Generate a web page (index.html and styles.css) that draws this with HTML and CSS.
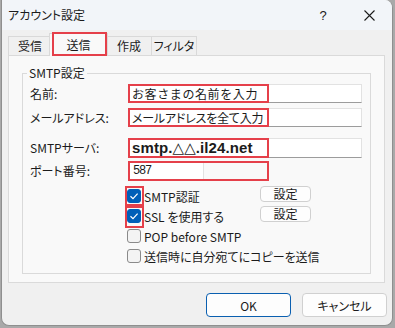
FILE: index.html
```html
<!DOCTYPE html>
<html lang="ja">
<head>
  <meta charset="UTF-8" />
  <title>アカウント設定</title>
  <link rel="stylesheet" href="styles.css">
</head>
<body>
  <div class="window">
    <div class="titlebar">
      <span class="title">アカウント設定</span>
      <span class="tb-btn help">?</span>
      <span class="tb-btn close">
        <svg width="11" height="11" viewBox="0 0 11 11"><path d="M0.5 0.5 L10.5 10.5 M10.5 0.5 L0.5 10.5" stroke="#1b1b1b" stroke-width="1.1" fill="none"/></svg>
      </span>
    </div>

    <div class="tabs">
      <div class="tab t-recv">受信</div>
      <div class="tab active">送信<span class="mark tab-mark"></span></div>
      <div class="tab t-make">作成</div>
      <div class="tab t-filter">フィルタ</div>
    </div>

    <div class="panel">
      <fieldset class="group">
        <legend>SMTP設定</legend>

        <div class="row first">
          <span class="lbl">名前:</span>
          <div class="field"><span class="mark field-mark name">お客さまの名前を入力</span></div>
        </div>
        <div class="row">
          <span class="lbl">メールアドレス:</span>
          <div class="field"><span class="mark field-mark mail">メールアドレスを全て入力</span></div>
        </div>
        <div class="row server">
          <span class="lbl">SMTPサーバ:</span>
          <div class="field"><span class="mark field-mark host">smtp.△△.il24.net</span></div>
        </div>
        <div class="row port">
          <span class="lbl">ポート番号:</span>
          <div class="field short"><span class="mark field-mark num">587</span></div>
        </div>

        <div class="checks">
          <div class="check">
            <span class="cb on"><svg width="14" height="14" viewBox="0 0 14 14"><path d="M3.5 7.2 L6 9.6 L10.6 4.6" stroke="#fff" stroke-width="1.2" fill="none"/></svg><span class="mark cb-mark"></span></span>
            <span>SMTP認証</span>
          </div>
          <button class="small-btn">設定</button>
          <div class="check">
            <span class="cb on"><svg width="14" height="14" viewBox="0 0 14 14"><path d="M3.5 7.2 L6 9.6 L10.6 4.6" stroke="#fff" stroke-width="1.2" fill="none"/></svg><span class="mark cb-mark tall"></span></span>
            <span>SSL を使用する</span>
          </div>
          <button class="small-btn">設定</button>
          <div class="check">
            <span class="cb"></span>
            <span>POP before SMTP</span>
          </div>
          <div></div>
          <div class="check wide">
            <span class="cb"></span>
            <span>送信時に自分宛てにコピーを送信</span>
          </div>
        </div>
      </fieldset>
    </div>

    <div class="footer">
      <button class="btn default">OK</button>
      <button class="btn">キャンセル</button>
    </div>
  </div>
</body>
</html>
```

FILE: styles.css
```css
body {
  margin: 0;
  background: #a9a9a9;
  font-family: "Noto Sans CJK JP", sans-serif;
  font-size: 12px;
  font-feature-settings: "palt";
  color: #1b1b1b;
}
.window {
  margin-left: 1px;
  width: 392px;
  height: 326px;
  box-sizing: border-box;
  background: #f0f0f0;
  border: 1px solid #8f8f8f;
  border-top: none;
  border-radius: 0 8px 8px 8px;
  overflow: hidden;
  display: flex;
  flex-direction: column;
}
.titlebar {
  height: 30px;
  flex: none;
  display: flex;
  align-items: center;
  background: #f2f5f9;
  padding-left: 6px;
}
.title { line-height: 16px; }
.tb-btn {
  width: 46px;
  height: 30px;
  display: flex;
  align-items: center;
  justify-content: center;
}
.help { margin-left: auto; font-family: "Liberation Sans", sans-serif; font-size: 13px; }

.tabs {
  display: flex;
  align-items: flex-end;
  height: 25px;
  flex: none;
  padding-left: 6px;
}
.tab {
  position: relative;
  box-sizing: border-box;
  height: 19px;
  line-height: 18px;
  text-align: center;
  margin-right: -1px;
  border: 1px solid #d9d9d9;
  border-bottom: none;
  background: #f0f0f0;
}
.t-recv { width: 44px; }
.t-make { width: 46px; }
.t-filter { width: 46px; }
.tab.active {
  width: 59px;
  height: 23px;
  line-height: 21px;
  margin: 0 -2px -1px -2px;
  background: #f9f9f9;
  z-index: 2;
}
.mark {
  position: absolute;
  box-sizing: border-box;
  border: 2px solid #e5404a;
}
.tab-mark { left: 2px; top: -2px; right: 0; bottom: 0; }

.panel {
  margin-left: 6px;
  width: 377px;
  height: 228px;
  box-sizing: border-box;
  background: #f9f9f9;
  border: 1px solid #dadada;
  padding: 9px 0 0 13px;
}
.group {
  margin: 0;
  width: 349px;
  height: 209px;
  box-sizing: border-box;
  border: 1px solid #dadada;
  padding: 0 0 0 7px;
}
.group legend {
  padding: 0 2px;
  margin-left: -3px;
  line-height: 16px;
}
.row {
  display: flex;
  align-items: center;
  height: 19px;
  margin-top: 5px;
}
.row.first { margin-top: 3px; }
.row.server { margin-top: 11px; height: 20px; }
.row.port { margin-top: 3px; height: 20px; }
.lbl { width: 98px; flex: none; line-height: 16px; }
.field {
  position: relative;
  width: 234px;
  height: 100%;
  box-sizing: border-box;
  background: #fff;
  border: 1px solid #e2e2e2;
  border-bottom-color: #9c9c9c;
}
.field.short { width: 76px; }
.field-mark {
  left: -1px;
  top: -1px;
  width: 141px;
  height: calc(100% + 2px);
  padding-left: 2px;
  font-size: 12px;
  line-height: 16px;
  white-space: nowrap;
  overflow: hidden;
}
.field-mark.name { font-feature-settings: normal; letter-spacing: 0.6px; }
.field-mark.mail { letter-spacing: -0.2px; }
.field-mark.host {
  font-family: "Liberation Sans", "DejaVu Sans", sans-serif;
  font-weight: bold;
  font-size: 15px;
  letter-spacing: 0.1px;
}
.field-mark.num {
  font-family: "Liberation Mono", monospace;
  font-size: 12px;
  letter-spacing: -1.2px;
  padding-left: 3px;
}

.checks {
  display: grid;
  grid-template-columns: 133px 51px;
  grid-auto-rows: 20px;
  margin: 5px 0 0 97px;
}
.check {
  display: flex;
  align-items: center;
  gap: 3px;
  white-space: nowrap;
}
.check.wide { grid-column: 1 / 3; }
.cb {
  position: relative;
  width: 14px;
  height: 14px;
  box-sizing: border-box;
  border: 1px solid #8a8a8a;
  border-radius: 3px;
  background: #f3f3f3;
  flex: none;
}
.cb.on { background: #005fb8; border-color: #005fb8; }
.cb svg { display: block; margin: -1px; }
.cb-mark { left: -3px; top: -4px; width: 19px; height: 20px; }
.cb-mark.tall { height: 22px; top: -4px; }
.small-btn {
  height: 16px;
  padding: 0;
  font: inherit;
  line-height: 14px;
  color: #1b1b1b;
  background: #fdfdfd;
  border: 1px solid #d0d0d0;
  border-radius: 4px;
}

.footer {
  display: flex;
  justify-content: flex-end;
  gap: 11px;
  padding: 10px 5px 0 0;
}
.btn {
  width: 85px;
  height: 24px;
  font: inherit;
  color: #1b1b1b;
  background: #fdfdfd;
  border: 1px solid #d0d0d0;
  border-radius: 4px;
}
.btn.default { border-color: #0a5fb0; }
```
